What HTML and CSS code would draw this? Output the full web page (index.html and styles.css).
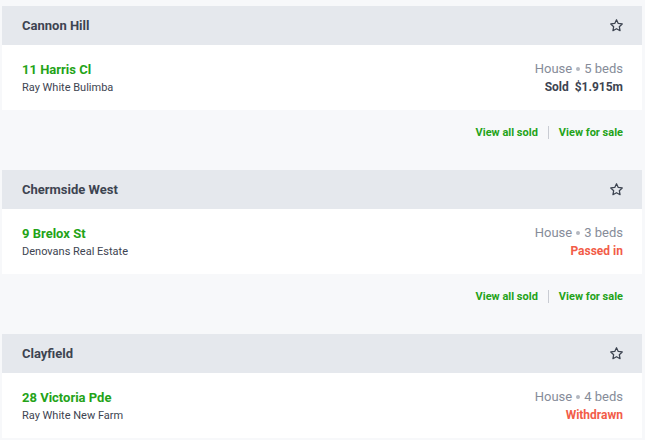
FILE: index.html
```html
<!DOCTYPE html>
<html lang="en">
<head>
    <meta charset="UTF-8">
    <meta name="viewport" content="width=device-width, initial-scale=1.0">
    <title>Recent sales</title>
    <link rel="stylesheet" href="styles.css">
</head>
<body>
    <div class="list">
        <!-- Cannon Hill -->
        <section class="suburb">
            <div class="suburb-head">
                <h2>Cannon Hill</h2>
                <button class="star" aria-label="Save suburb">
                    <svg width="15" height="15" viewBox="0 0 24 24"><path d="M12 2.8l2.8 5.9 6.4.8-4.7 4.4 1.2 6.4L12 17.1l-5.7 3.2 1.2-6.4-4.7-4.4 6.4-.8z"/></svg>
                </button>
            </div>
            <div class="sale">
                <div class="sale-left">
                    <a class="address" href="#">11 Harris Cl</a>
                    <span class="agency">Ray White Bulimba</span>
                </div>
                <div class="sale-right">
                    <span class="meta">House <i class="dot"></i> 5 beds</span>
                    <span class="status">Sold&nbsp; $1.915m</span>
                </div>
            </div>
            <div class="suburb-links">
                <a href="#">View all sold</a>
                <span class="sep"></span>
                <a href="#">View for sale</a>
            </div>
        </section>

        <!-- Chermside West -->
        <section class="suburb">
            <div class="suburb-head">
                <h2>Chermside West</h2>
                <button class="star" aria-label="Save suburb">
                    <svg width="15" height="15" viewBox="0 0 24 24"><path d="M12 2.8l2.8 5.9 6.4.8-4.7 4.4 1.2 6.4L12 17.1l-5.7 3.2 1.2-6.4-4.7-4.4 6.4-.8z"/></svg>
                </button>
            </div>
            <div class="sale">
                <div class="sale-left">
                    <a class="address" href="#">9 Brelox St</a>
                    <span class="agency">Denovans Real Estate</span>
                </div>
                <div class="sale-right">
                    <span class="meta">House <i class="dot"></i> 3 beds</span>
                    <span class="status red">Passed in</span>
                </div>
            </div>
            <div class="suburb-links">
                <a href="#">View all sold</a>
                <span class="sep"></span>
                <a href="#">View for sale</a>
            </div>
        </section>

        <!-- Clayfield -->
        <section class="suburb">
            <div class="suburb-head">
                <h2>Clayfield</h2>
                <button class="star" aria-label="Save suburb">
                    <svg width="15" height="15" viewBox="0 0 24 24"><path d="M12 2.8l2.8 5.9 6.4.8-4.7 4.4 1.2 6.4L12 17.1l-5.7 3.2 1.2-6.4-4.7-4.4 6.4-.8z"/></svg>
                </button>
            </div>
            <div class="sale">
                <div class="sale-left">
                    <a class="address" href="#">28 Victoria Pde</a>
                    <span class="agency">Ray White New Farm</span>
                </div>
                <div class="sale-right">
                    <span class="meta">House <i class="dot"></i> 4 beds</span>
                    <span class="status red">Withdrawn</span>
                </div>
            </div>
            <div class="suburb-links">
                <a href="#">View all sold</a>
                <span class="sep"></span>
                <a href="#">View for sale</a>
            </div>
        </section>
    </div>
</body>
</html>
```

FILE: styles.css
```css
body {
    margin: 0;
    background-color: #f7f8fa;
    font-family: Roboto, "Noto Sans", Arial, sans-serif;
    color: #3d4451;
}
.list {
    padding: 6px 3px 0 2px;
}
.suburb-head {
    display: flex;
    justify-content: space-between;
    align-items: center;
    height: 39px;
    padding: 0 18px 0 20px;
    background-color: #e5e8ed;
}
.suburb-head h2 {
    margin: 0;
    font-size: 13px;
    font-weight: 700;
}
.star {
    display: flex;
    padding: 0;
    border: 0;
    background: none;
    cursor: pointer;
}
.star svg {
    fill: none;
    stroke: #3d4451;
    stroke-width: 2;
    stroke-linejoin: round;
}
.sale {
    display: flex;
    justify-content: space-between;
    align-items: center;
    height: 65px;
    padding: 0 19px 0 20px;
    background-color: #fff;
}
.sale-left, .sale-right {
    display: flex;
    flex-direction: column;
    gap: 4px;
}
.sale-right {
    align-items: flex-end;
}
.address {
    color: #24a318;
    font-size: 13px;
    font-weight: 700;
    text-decoration: none;
}
.agency {
    font-size: 11px;
}
.meta {
    display: flex;
    align-items: center;
    gap: 4px;
    color: #868c99;
    font-size: 13px;
}
.dot {
    width: 4px;
    height: 4px;
    border-radius: 50%;
    background-color: #b4b8c0;
}
.status {
    font-size: 12px;
    font-weight: 700;
}
.status.red {
    color: #f25c48;
}
.suburb-links {
    display: flex;
    justify-content: flex-end;
    align-items: center;
    gap: 10px;
    height: 44px;
    padding: 0 19px 16px;
}
.suburb-links a {
    color: #24a318;
    font-size: 11px;
    font-weight: 700;
    text-decoration: none;
}
.sep {
    width: 1px;
    height: 13px;
    background-color: #c9ccd3;
}
```
